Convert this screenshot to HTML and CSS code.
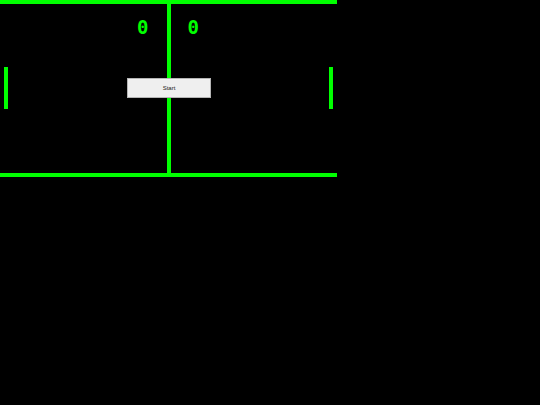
FILE: index.html
```html
<!DOCTYPE html>
<html>
<head>
<meta charset="utf-8">
<link rel="stylesheet" href="styles.css">
</head>
<body>
<div class="field">
  <div class="net"></div>
  <div class="scores">
    <span class="score">0</span>
    <span class="score">0</span>
  </div>
  <div class="paddle paddle-left"></div>
  <div class="paddle paddle-right"></div>
  <button class="start">Start</button>
</div>
</body>
</html>
```
FILE: styles.css
```css
html, body {
  margin: 0;
  padding: 0;
  background: #000;
  width: 540px;
  height: 405px;
  overflow: hidden;
}
.field {
  position: relative;
  width: 337px;
  height: 169px;
  border-top: 4px solid #00ff00;
  border-bottom: 4px solid #00ff00;
}
.net {
  position: absolute;
  left: 167px;
  top: 0;
  width: 4px;
  height: 169px;
  background: #00ff00;
}
.scores {
  position: absolute;
  top: 12px;
  left: 137px;
  display: flex;
  gap: 39px;
}
.score {
  font-family: "DejaVu Sans Mono", monospace;
  font-size: 19px;
  font-weight: bold;
  color: #00ff00;
  line-height: 22px;
}
.paddle {
  position: absolute;
  top: 63px;
  width: 4px;
  height: 42px;
  background: #00ff00;
}
.paddle-left { left: 4px; }
.paddle-right { left: 329px; }
.start {
  position: absolute;
  left: 127px;
  top: 74px;
  width: 84px;
  height: 20px;
  margin: 0;
  padding: 0;
  background: #efefef;
  border: 1px solid #b5b5b5;
  border-radius: 0;
  font-family: "Liberation Sans", Arial, sans-serif;
  font-size: 6px;
  color: #222;
}
```
